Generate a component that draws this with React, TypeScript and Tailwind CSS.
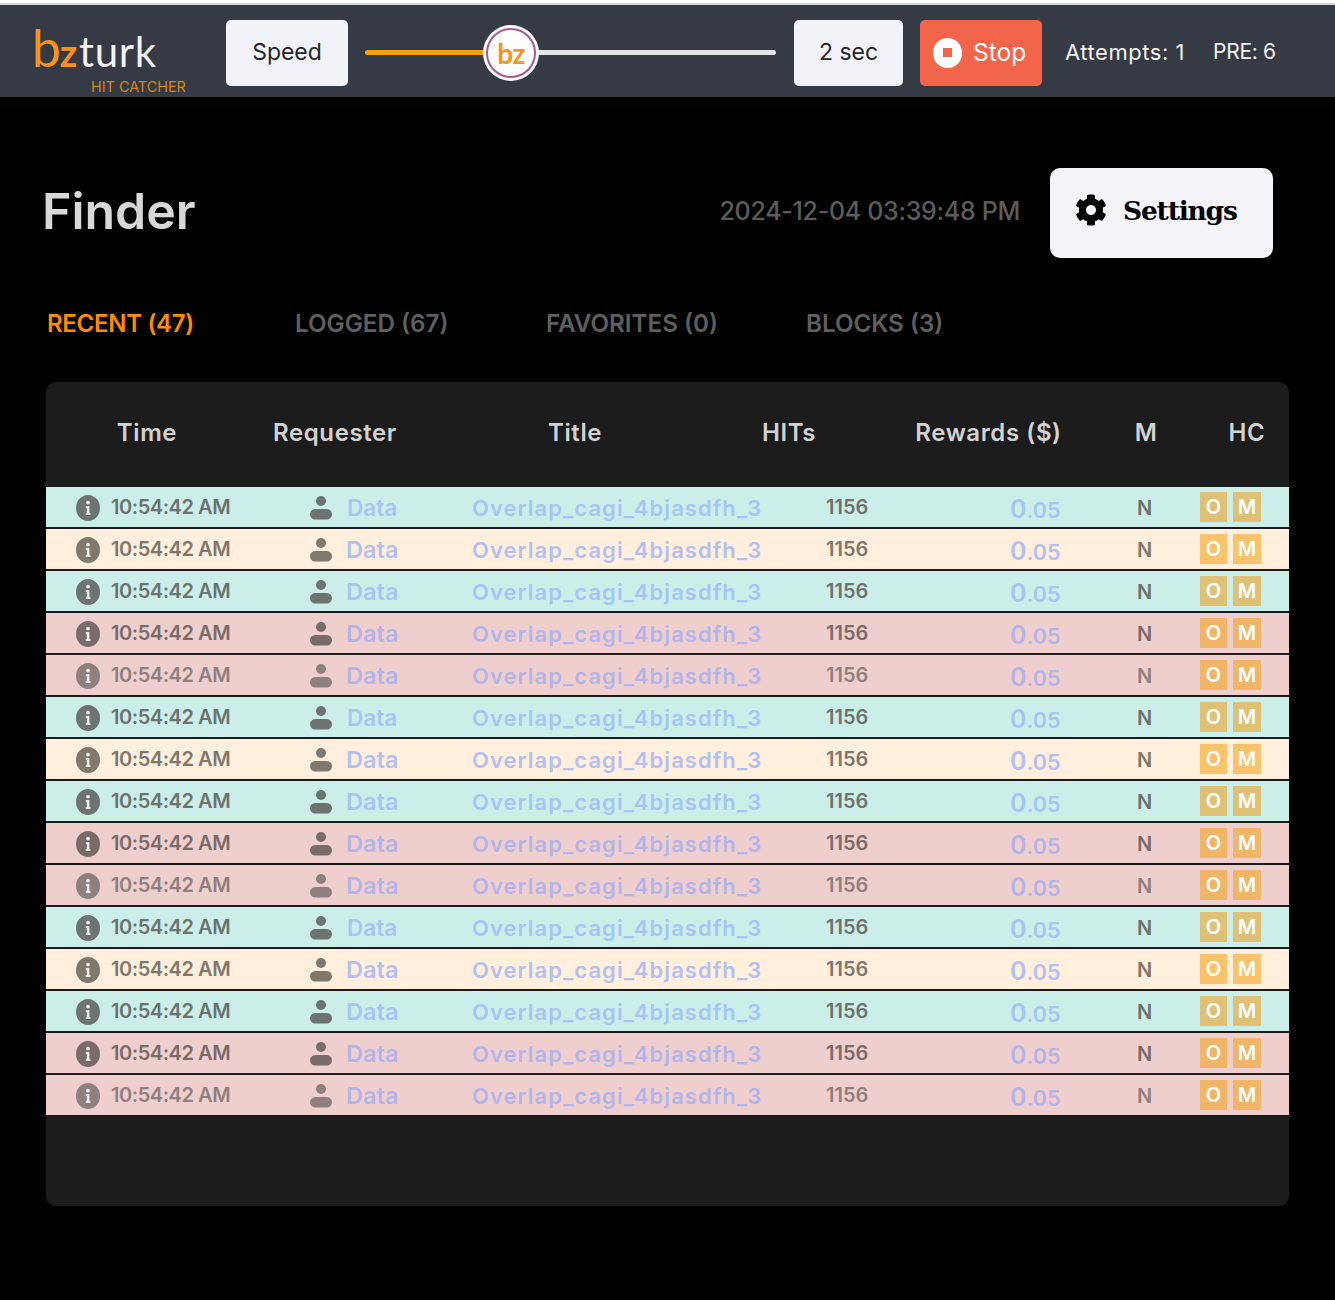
import { FaCog } from "react-icons/fa";

type Row = { bg: string; fade?: boolean; tight?: boolean };

const TEAL = "bg-[#cbefe8]";
const CREAM = "bg-[#ffefdc]";
const PINK = "bg-[#efcfcd]";

const rows: Row[] = [
  { bg: TEAL, tight: true },
  { bg: CREAM },
  { bg: TEAL },
  { bg: PINK },
  { bg: PINK, fade: true },
  { bg: TEAL, tight: true },
  { bg: CREAM },
  { bg: TEAL },
  { bg: PINK },
  { bg: PINK, fade: true },
  { bg: TEAL, tight: true },
  { bg: CREAM },
  { bg: TEAL },
  { bg: PINK },
  { bg: PINK, fade: true },
];

function InfoIcon() {
  return (
    <svg width="24" height="26" viewBox="0 0 24 26" className="shrink-0 mt-[2px]">
      <ellipse cx="12" cy="13" rx="12" ry="13" fill="currentColor" />
      <circle cx="12" cy="7.6" r="1.9" fill="#fff" fillOpacity="0.85" />
      <path d="M9.8 11h3.6v7h1v2H9.8v-2h1v-5h-1z" fill="#fff" fillOpacity="0.85" />
    </svg>
  );
}

function PersonIcon() {
  return (
    <svg width="22" height="24" viewBox="0 0 22 24" className="shrink-0 mt-[2px]">
      <circle cx="11" cy="5" r="5" fill="currentColor" />
      <rect x="0" y="13" width="22" height="10.5" rx="5.2" fill="currentColor" />
    </svg>
  );
}

function TableRow({ row }: { row: Row }) {
  const ink = row.fade ? "text-[#8f8080]" : "text-[#6c7370]";
  const inkColor =
    row.bg === CREAM ? "text-[#7f786c]" : row.bg === PINK && !row.fade ? "text-[#7a6b6b]" : ink;
  const link =
    row.bg === TEAL ? "text-[#a6c4f5]" : row.bg === CREAM ? "text-[#b4c0f0]" : "text-[#b4b4ea]";
  const box = row.bg === TEAL ? "bg-[#dfc176]" : row.bg === CREAM ? "bg-[#f9c36c]" : "bg-[#f0b566]";

  return (
    <div
      className={`${row.bg} ${inkColor} h-10 grid grid-cols-[234px_162px_354px_184px_127px_63px_1fr] items-center pl-[30px] font-['Inter','Noto_Sans',sans-serif] font-semibold text-[20px]`}
    >
      <div className="flex items-center gap-[11px]">
        <InfoIcon />
        <span className="text-[20px] tracking-[-0.45px] leading-none">10:54:42 AM</span>
      </div>
      <div className="flex items-center">
        <PersonIcon />
        <span
          className={`${link} ${row.tight ? "ml-[15px] text-[22.5px]" : "ml-[14px] text-[23.5px]"} leading-none mt-[2px]`}
        >
          Data
        </span>
      </div>
      <div className={`${link} text-[22px] tracking-[1.05px] leading-none mt-[2px]`}>
        Overlap_cagi_4bjasdfh_3
      </div>
      <div className="text-[20px] leading-none">1156</div>
      <div className={`${link} leading-none mt-[4px]`}>
        <span className="text-[25px]">0</span>
        <span className="text-[21.5px]">.05</span>
      </div>
      <div className="text-[20px] leading-none mt-[2px]">N</div>
      <div className="flex gap-[6px]">
        <span className={`${box} w-[27px] h-[30px] flex items-center justify-center text-white text-[20px] leading-none`}>O</span>
        <span className={`${box} w-[28px] h-[30px] flex items-center justify-center text-white text-[20px] leading-none`}>M</span>
      </div>
    </div>
  );
}

function TopBar() {
  return (
    <div className="border-t-[3px] border-white">
      <div className="h-[94px] bg-[#363a45] border-t-2 border-[#d4d4d4] flex items-center font-['Inter','Noto_Sans',sans-serif]">
        <div className="w-[226px] shrink-0 pl-[32px] h-full relative">
          <div className="mt-[16px] font-['Lato',sans-serif] leading-none flex items-baseline h-[52px]">
            <span className="text-[#f7931e] font-normal text-[52px] tracking-[-1.5px]">b</span>
            <span className="text-[#f7931e] font-bold text-[38px]">z</span>
            <span className="text-[#f2f2f2] font-normal text-[42px] tracking-[0.6px] ml-[2px]">turk</span>
          </div>
          <div className="absolute left-[91px] top-[75px] text-[14.4px] leading-none text-[#d9860f]">
            HIT CATCHER
          </div>
        </div>
        <div className="w-[122px] h-[66px] bg-[#f2f3f8] rounded-[5px] flex items-center justify-center text-[23px] text-[#25262b] mt-[3px]">
          Speed
        </div>
        <div className="w-[411px] ml-[17px] relative h-[56px] flex items-center mt-[3px]">
          <div className="h-[5px] w-[119px] bg-[#ffa000] rounded-l-full" />
          <div className="h-[5px] flex-1 bg-[#e5e5e5] rounded-r-full" />
          <div className="absolute left-[118px] top-0 w-[56px] h-[56px] rounded-full bg-white flex items-center justify-center">
            <div className="w-[50px] h-[50px] rounded-full border-[2px] border-[#a9588f] flex items-center justify-center text-[#f7931e] text-[28px] font-['Lato',sans-serif] font-bold leading-none tracking-[-0.5px]">
              bz
            </div>
          </div>
        </div>
        <div className="w-[109px] h-[66px] ml-[18px] bg-[#f2f3f8] rounded-[5px] flex items-center justify-center text-[23px] text-[#25262b] mt-[3px]">
          2 sec
        </div>
        <div className="w-[122px] h-[66px] ml-[17px] bg-[#f3654a] rounded-[5px] flex items-center pl-[13px] gap-[11px] text-[24.5px] text-white mt-[3px]">
          <span className="w-[29px] h-[30px] rounded-full bg-white flex items-center justify-center">
            <span className="w-[9px] h-[9px] bg-[#f3654a]" />
          </span>
          Stop
        </div>
        <span className="ml-[23px] text-[22px] tracking-[0.55px] text-[#f2f2f2] whitespace-nowrap mt-[2px]">Attempts: 1</span>
        <span className="ml-[28px] text-[21px] tracking-[-0.3px] text-[#f2f2f2] whitespace-nowrap mt-[2px]">PRE: 6</span>
      </div>
    </div>
  );
}

export default function App() {
  return (
    <div className="bg-black h-[1300px] overflow-hidden">
      <TopBar />

      <div className="font-['Inter','Noto_Sans',sans-serif]">
        <div className="flex items-center h-[90px] mt-[71px] pl-[42px]">
          <h1 className="text-[50px] font-semibold text-[#d8d8d8] leading-none -mt-[4px]">Finder</h1>
          <span className="ml-auto text-[25px] font-medium text-[#5c5c5c] tracking-[-0.3px] -mt-[2px]">2024-12-04 03:39:48 PM</span>
          <button className="ml-[30px] mr-[62px] w-[223px] h-[90px] bg-[#f4f4f9] rounded-[10px] flex items-center pl-[25px] gap-[16px] text-black font-['DejaVu_Serif',serif] font-bold text-[26.5px] tracking-[-1.2px]">
            <FaCog size={32} className="-mt-[6px]" />
            <span className="-mt-[4px]">Settings</span>
          </button>
        </div>

        <div className="flex items-center mt-[48px] pl-[47px] h-[36px] text-[24.2px] font-semibold leading-none text-[#5f5f5f]">
          <span className="text-[#ff8c00] w-[248px] text-[24px] tracking-[-0.3px]">RECENT (47)</span>
          <span className="w-[251px]">LOGGED (67)</span>
          <span className="w-[260px]">FAVORITES (0)</span>
          <span>BLOCKS (3)</span>
        </div>

        <div className="mx-[46px] mt-[40px] h-[824px] bg-[#1c1c1c] rounded-[10px] overflow-hidden">
          <div className="h-[105px] grid grid-cols-[202px_174px_306px_122px_257px_78px_1fr] items-center text-center text-[24px] font-semibold tracking-[0.6px] text-[#d2d2d2] pb-[4px]">
            <div>Time</div>
            <div>Requester</div>
            <div>Title</div>
            <div>HITs</div>
            <div className="pl-[20px]">Rewards ($)</div>
            <div>M</div>
            <div className="pl-[20px]">HC</div>
          </div>
          <div className="flex flex-col gap-[2px]">
            {rows.map((row, i) => (
              <TableRow key={i} row={row} />
            ))}
          </div>
        </div>
      </div>
    </div>
  );
}
